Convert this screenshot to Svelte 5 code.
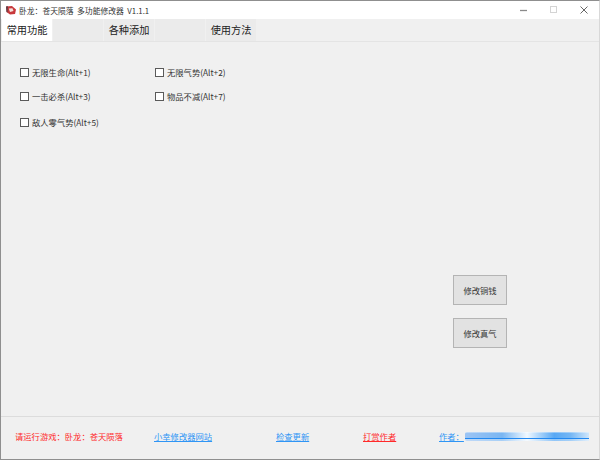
<script>
  const options = [
    { label: '无限生命(Alt+1)', cls: 'r1' },
    { label: '无限气势(Alt+2)', cls: 'r1' },
    { label: '一击必杀(Alt+3)', cls: 'r2' },
    { label: '物品不减(Alt+7)', cls: 'r2' },
    { label: '敌人零气势(Alt+5)', cls: 'r3' }
  ];
  const tabs = [
    { label: '常用功能', active: true },
    { label: '' },
    { label: '各种添加' },
    { label: '' },
    { label: '使用方法' }
  ];
</script>

<div class="win">
  <header class="title">
    <svg class="logo" viewBox="0 0 12 12" width="12" height="12" aria-hidden="true">
      <path d="M1 2.5 L7 2 L11 5.5 L10 10 L5 10.5 L1.5 8 Z" fill="#c8383c"/>
      <path d="M3.8 4.5 L7.5 4.2 L8.5 7 L5 8 Z" fill="#f3e3dc"/>
      <path d="M1 2.5 L3 2.2 L2.5 8.5 L1.5 8 Z" fill="#5a4048"/>
    </svg>
    <span class="title-text">卧龙&#xFF1A;苍天陨落&nbsp;&nbsp;多功能修改器&nbsp;&nbsp;V1.1.1</span>
    <div class="controls">
      <svg width="10" height="10" viewBox="0 0 10 10" class="min"><path d="M1 5.5h7" stroke="#8a8a8a" stroke-width="1.3"/></svg>
      <svg width="10" height="10" viewBox="0 0 10 10" class="max"><rect x="1.5" y="1.5" width="6" height="6" fill="none" stroke="#d4d4d4"/></svg>
      <svg width="10" height="10" viewBox="0 0 10 10" class="close"><path d="M1.5 1.5l7 7M8.5 1.5l-7 7" stroke="#555" stroke-width="0.9"/></svg>
    </div>
  </header>

  <nav class="tabs">
    {#each tabs as t}
      <div class="tab" class:active={t.active}>{t.label}</div>
    {/each}
  </nav>

  <main class="body">
    <div class="grid">
      {#each options as o}
        <label class="opt {o.cls}"><span class="box"></span>{o.label}</label>
      {/each}
    </div>
    <div class="actions">
      <button>修改铜钱</button>
      <button>修改真气</button>
    </div>
  </main>

  <footer class="foot">
    <span class="red run">请运行游戏&#xFF1A;卧龙&#xFF1A;苍天陨落</span>
    <span class="blue u site">小幸修改器网站</span>
    <span class="blue u upd">检查更新</span>
    <span class="red u tip">打赏作者</span>
    <span class="blue u author">作者&#xFF1A;</span>
    <span class="bar"></span>
  </footer>
</div>

<style>
  :global(body) { margin: 0; background: #f0f0f0; }
  .win {
    width: 600px; height: 460px; box-sizing: border-box;
    display: flex; flex-direction: column;
    border-top: 1px solid #8f8f8f; border-left: 1px solid #8f8f8f;
    border-bottom: 1px solid #8f8f8f; border-right: 1px solid #d8d8d8;
    background: #f0f0f0; overflow: hidden;
    font-family: "Noto Sans CJK SC", "Liberation Sans", sans-serif;
    font-size: 8.3px; color: #333;
  }
  .title {
    height: 18px; background: #fff; flex: none;
    display: flex; align-items: center; padding-left: 4px;
  }
  .logo { flex: none; margin-right: 2px; }
  .title-text { font-size: 7.8px; color: #333; }
  .controls { margin-left: auto; display: flex; align-items: center; gap: 20px; padding-right: 10px; }
  .tabs {
    height: 22px; flex: none; display: flex; padding-left: 1px;
    gap: 1px; background: #f0f0f0; border-bottom: 1px solid #e4e4e4; box-sizing: content-box;
  }
  .tab {
    width: 50px; height: 22px; background: #ebebeb; text-align: center;
    font-size: 10.2px; line-height: 21px; color: #222;
  }
  .tab.active { background: #fff; }
  .body { flex: 1; position: relative; display: flex; flex-direction: column; border-bottom: 1px solid #dcdcdc; }
  .grid {
    display: grid; grid-template-columns: 135px 135px; padding: 20px 0 0 19px;
    grid-auto-rows: min-content;
  }
  .opt { display: flex; align-items: center; gap: 3px; height: 20px; color: #333; }
  .r2 { margin-top: 4px; }
  .r3 { margin-top: 6px; }
  .box { width: 7px; height: 7px; border: 1px solid #5a5a5a; background: #fff; flex: none; }
  .actions {
    margin-top: auto; margin-left: auto; margin-right: 92px; margin-bottom: 68px;
    display: flex; flex-direction: column; gap: 13px;
  }
  button {
    width: 54px; height: 30px; padding: 0; border: 1px solid #b4b4b4; background: #e2e2e2;
    font: inherit; color: #333;
  }
  .foot {
    height: 42px; flex: none; display: flex; align-items: center; padding-bottom: 5px; box-sizing: border-box;
  }
  .red { color: #ff2a2a; }
  .blue { color: #2f95f5; }
  .u { text-decoration: underline; }
  .run { margin-left: 14px; width: 139px; }
  .site { width: 122px; }
  .upd { width: 87px; }
  .tip { width: 76px; }
  .author { width: 26px; }
  .bar {
    width: 124px; height: 9px; margin-top: 2px; box-sizing: border-box; border-radius: 2px 0 0 2px;
    background:
      linear-gradient(180deg, rgba(255,255,255,.35) 0 1px, transparent 1px 6px, #2288f0 6px 7px, rgba(255,255,255,.35) 7px),
      linear-gradient(90deg, #9cc4f4 0%, #7ab6f2 30%, #f0f8ff 50%, #58a8f4 72%, #74b6f4 85%, #cfe6fb 100%);
  }
</style>
